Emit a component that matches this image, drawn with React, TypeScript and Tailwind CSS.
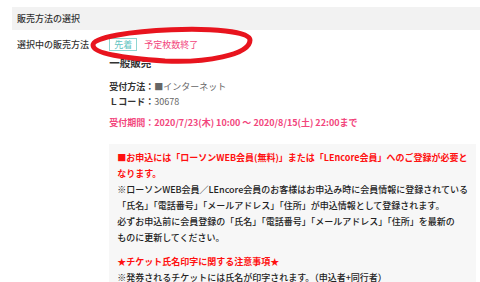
export default function App() {
  return (
    <div
      className="relative w-[480px] h-[282px] overflow-hidden bg-white text-[#333]"
      style={{ fontFamily: '"Noto Sans CJK JP", "Noto Sans", sans-serif' }}
    >
      <div className="pt-[7px] pl-[12px]">
        <div className="h-[23px] bg-[#f2f2f2] flex items-center pl-[5px] text-[9px] font-medium">
          販売方法の選択
        </div>
      </div>

      <div className="flex pl-[17px] pt-[8px]">
        <div className="w-[94px] h-[13px] flex items-center text-[9px] font-medium">選択中の販売方法</div>
        <div className="flex-1 pr-[4px]">
          <div className="flex items-center gap-[7px] text-[9px]">
            <span className="h-[13px] px-[4px] border border-[#8fd6d2] text-[#5ec3c0] flex items-center leading-none">
              先着
            </span>
            <span className="text-[#f2457c]">予定枚数終了</span>
          </div>

          <div className="mt-[5px] text-[10.5px] font-bold leading-[12px]">一般販売</div>

          <div className="mt-[10px] text-[9px] leading-[15px]">
            <div>
              <span className="font-bold">受付方法：</span>
              <span className="text-[#666]">■インターネット</span>
            </div>
            <div>
              <span className="font-bold">Ｌコード：</span>
              <span className="text-[#666]">30678</span>
            </div>
            <div className="mt-[6px] text-[#f2457c] font-bold">
              受付期間：2020/7/23(木) 10:00 ～ 2020/8/15(土) 22:00まで
            </div>
          </div>

          <div className="mt-[14px] bg-[#f7f7f7] px-[8px] pt-[6px] text-[9px] leading-[16px] font-medium text-[#222] whitespace-nowrap">
            <p className="text-[#ff1010] font-bold">
              ■お申込には「ローソンWEB会員(無料)」または「LEncore会員」へのご登録が必要と
              <br />
              なります。
            </p>
            <p>
              ※ローソンWEB会員／LEncore会員のお客様はお申込み時に会員情報に登録されている
              <br />
              「氏名」「電話番号」「メールアドレス」「住所」が申込情報として登録されます。
            </p>
            <p>
              必ずお申込前に会員登録の「氏名」「電話番号」「メールアドレス」「住所」を最新の
              <br />
              ものに更新してください。
            </p>
            <p className="mt-[8px] text-[#ff1010] font-bold">★チケット氏名印字に関する注意事項★</p>
            <p>※発券されるチケットには氏名が印字されます。（申込者+同行者）</p>
          </div>
        </div>
      </div>

      <svg
        className="absolute left-0 top-0 pointer-events-none"
        width="480"
        height="282"
        viewBox="0 0 480 282"
      >
        <path
          d="M 93 45 C 93 29, 250 22, 250 40 C 250 55, 205 63, 165 61 C 125 58, 93 54, 93 45 Z"
          fill="none"
          stroke="#e8141e"
          strokeWidth="5"
        />
      </svg>
    </div>
  );
}
